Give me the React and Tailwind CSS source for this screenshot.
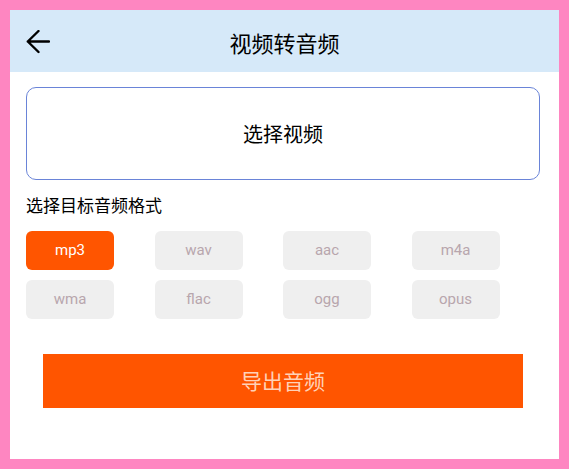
import React, { useState } from 'react';

const FORMATS = ['mp3', 'wav', 'aac', 'm4a', 'wma', 'flac', 'ogg', 'opus'];

const cjk = { fontFamily: '"Noto Sans CJK SC", "Noto Sans", sans-serif' };

export default function App() {
  const [format, setFormat] = useState('mp3');

  return (
    <div className="min-h-screen bg-[#fe86c1] p-[10px]" style={cjk}>
      <div className="h-[449px] bg-white">
        <div className="flex h-[62px] items-center bg-[#d6e9f9] px-4 pt-[2px]">
          <button className="flex h-6 w-6 items-center" aria-label="back">
            <svg width="24" height="24" viewBox="0 0 24 24" fill="none" stroke="#000" strokeWidth="2.4" strokeLinecap="round" strokeLinejoin="round">
              <path d="M23 11.5H1.8M12.5 1L1.8 11.5 12.5 22" />
            </svg>
          </button>
          <h1 className="flex-1 text-center text-[22px] leading-none text-black">视频转音频</h1>
          <div className="w-6" />
        </div>

        <button className="ml-4 mt-[15px] flex h-[93px] w-[514px] items-center justify-center rounded-[10px] border border-[#6a84d8] text-[20px] text-black">
          选择视频
        </button>

        <p className="ml-4 mt-[13px] text-[17px] leading-6 text-black">选择目标音频格式</p>

        <div className="ml-4 mt-[14px] grid w-[514px] grid-cols-4 gap-y-[10px]">
          {FORMATS.map((f) => (
            <button
              key={f}
              onClick={() => setFormat(f)}
              className={`flex h-[39px] w-[88px] items-center justify-center rounded-[6px] text-[15px] ${
                f === format ? 'bg-[#ff5500] text-white' : 'bg-[#efefef] text-[#b8a6ad]'
              }`}
              style={{ fontFamily: 'Roboto, sans-serif' }}
            >
              {f}
            </button>
          ))}
        </div>

        <button className="ml-[33px] mt-[35px] flex h-[54px] w-[480px] items-center justify-center bg-[#ff5500] text-[21px] text-[#ffd2b8]">
          导出音频
        </button>
      </div>
    </div>
  );
}
